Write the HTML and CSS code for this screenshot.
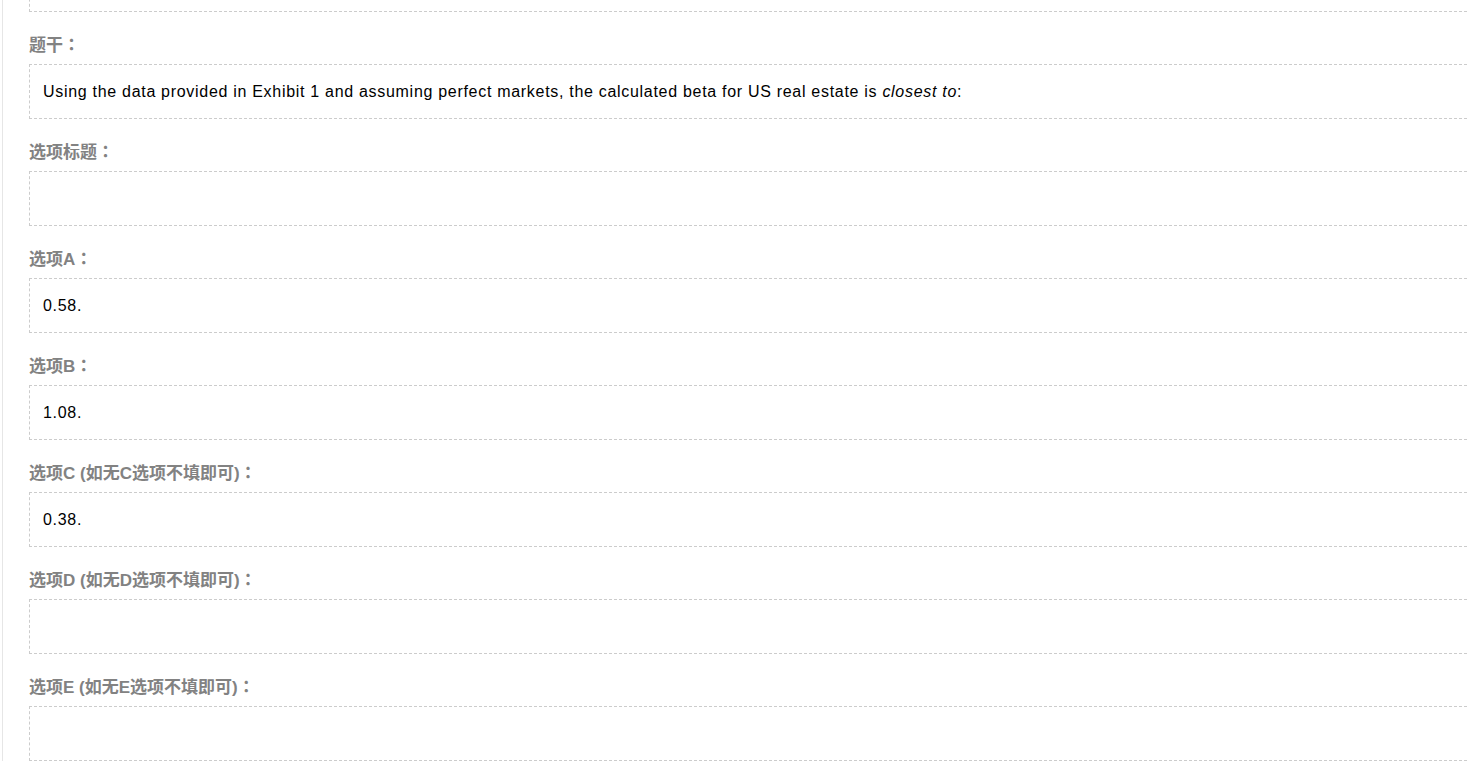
FILE: index.html
```html
<!DOCTYPE html>
<html lang="zh-CN">
  <head>
    <meta charset="UTF-8" />
    <meta name="viewport" content="width=device-width, initial-scale=1.0" />
    <title>编辑题目</title>
    <link rel="stylesheet" href="styles.css">
  </head>
  <body>
    <div class="panel">
      <div class="form">
        <div class="field">
          <div class="box"></div>
        </div>

        <div class="field">
          <label class="field-label">题干<span class="colon">：</span></label>
          <div class="box">Using the data provided in Exhibit 1 and assuming perfect markets, the calculated beta for US real estate is <em>closest to</em>:</div>
        </div>

        <div class="field">
          <label class="field-label">选项标题<span class="colon">：</span></label>
          <div class="box"></div>
        </div>

        <div class="field">
          <label class="field-label">选项A<span class="colon">：</span></label>
          <div class="box">0.58.</div>
        </div>

        <div class="field">
          <label class="field-label">选项B<span class="colon">：</span></label>
          <div class="box">1.08.</div>
        </div>

        <div class="field">
          <label class="field-label">选项C (如无C选项不填即可)<span class="colon">：</span></label>
          <div class="box">0.38.</div>
        </div>

        <div class="field">
          <label class="field-label">选项D (如无D选项不填即可)<span class="colon">：</span></label>
          <div class="box"></div>
        </div>

        <div class="field">
          <label class="field-label">选项E (如无E选项不填即可)<span class="colon">：</span></label>
          <div class="box"></div>
        </div>
      </div>
    </div>
  </body>
</html>
```

FILE: styles.css
```css
* {
  box-sizing: border-box;
  margin: 0;
  padding: 0;
}

html,
body {
  overflow: hidden;
  background: #fff;
}

body {
  font-family: "Liberation Sans", Arial, "Noto Sans CJK SC", sans-serif;
  color: #000;
}

.panel {
  margin-left: 2px;
  width: 1520px;
  border-left: 1px solid #e6e6e6;
  padding-left: 26px;
  min-height: 100vh;
}

/* page is scrolled down a bit, first box is cut off */
.form {
  margin-top: -66px;
}

.field {
  padding-top: 23px;
}

.field-label {
  display: block;
  height: 20px;
  line-height: 18px;
  margin-bottom: 9px;
  font-size: 17px;
  font-weight: bold;
  color: #828282;
}

/* full-width colon sits in the middle of its cell */
.field-label .colon {
  font-family: "Noto Sans CJK TC", sans-serif;
  font-feature-settings: "locl" 0;
}

.box {
  height: 55px;
  border: 1px dashed #cccccc;
  padding: 16px 13px;
  font-size: 16px;
  letter-spacing: 0.7px;
  line-height: 21px;
  color: #000;
}

.box em {
  font-style: italic;
}
```
